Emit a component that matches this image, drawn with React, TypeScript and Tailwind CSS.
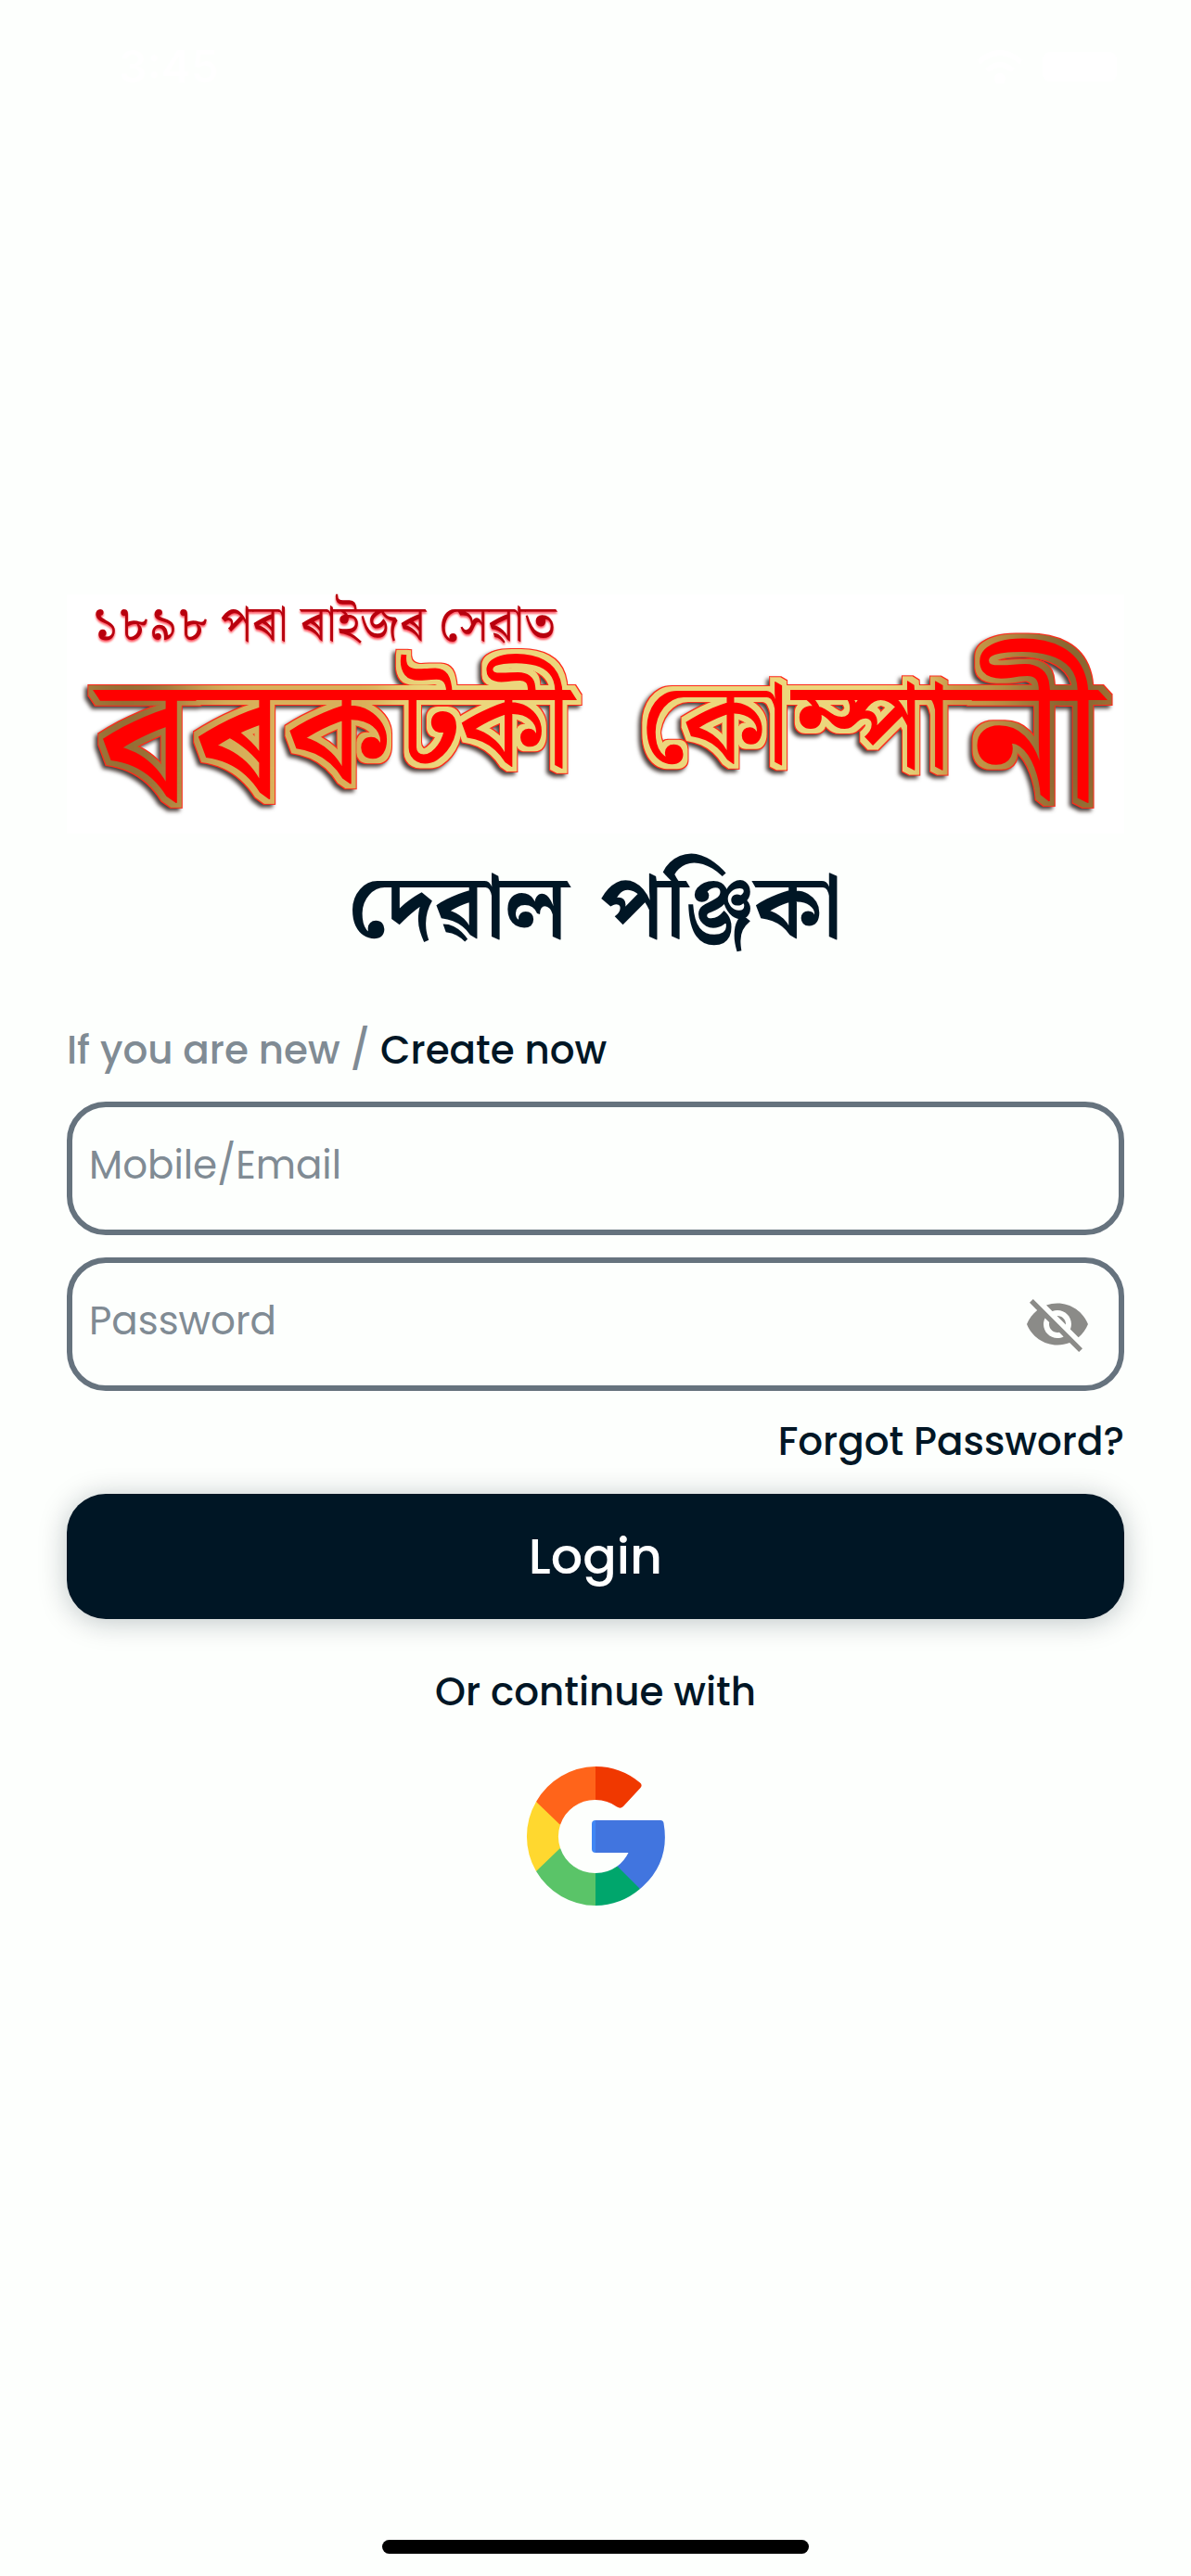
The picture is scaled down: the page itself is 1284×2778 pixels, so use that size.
import { useState } from "react";

const words = [
  [
    { t: "ব", x: 35, y: 222, s: 190 },
    { t: "ৰ", x: 138, y: 218, s: 184 },
    { t: "ক", x: 237, y: 202, s: 158 },
    { t: "ট", x: 358, y: 186, s: 132 },
    { t: "কী", x: 423, y: 184, s: 130 },
  ],
  [
    { t: "কো", x: 618, y: 181, s: 124 },
    { t: "ম্পা", x: 784, y: 186, s: 132 },
    { t: "নী", x: 975, y: 220, s: 186 },
  ],
];

function BrandLogo() {
  return (
    <svg viewBox="0 0 1140 258" className="w-full overflow-visible" role="img" lang="as" aria-label="১৮৯৮ পৰা ৰাইজৰ সেৱাত বৰকটকী কোম্পানী">
      <defs>
        <filter id="gilt" filterUnits="userSpaceOnUse" x="0" y="0" width="1140" height="258" colorInterpolationFilters="sRGB">
          <feMorphology in="SourceAlpha" operator="dilate" radius="6" result="rim" />
          <feMorphology in="SourceAlpha" operator="dilate" radius="5" result="edge" />
          <feFlood floodColor="#ecd67c" result="base" />
          <feFlood x="0" y="0" width="340" height="258" floodColor="#d9b05a" result="l2" />
          <feFlood x="0" y="0" width="130" height="258" floodColor="#946c34" result="l1" />
          <feFlood x="940" y="0" width="200" height="258" floodColor="#c69748" result="r2" />
          <feFlood x="1030" y="0" width="110" height="258" floodColor="#85622f" result="r1" />
          <feMerge result="bands">
            <feMergeNode in="l2" />
            <feMergeNode in="l1" />
            <feMergeNode in="r2" />
            <feMergeNode in="r1" />
          </feMerge>
          <feGaussianBlur in="bands" stdDeviation="30" result="soft" />
          <feMerge result="metal">
            <feMergeNode in="base" />
            <feMergeNode in="l2" />
            <feMergeNode in="r2" />
            <feMergeNode in="soft" />
          </feMerge>
          <feGaussianBlur in="metal" stdDeviation="12 0" result="metalSoft" />
          <feComposite in="metalSoft" in2="edge" operator="in" result="gold" />
          <feFlood floodColor="#ff2a1a" />
          <feComposite in2="rim" operator="in" result="redRim" />
          <feOffset in="rim" dx="-3" dy="3" />
          <feGaussianBlur stdDeviation="2" result="blurred" />
          <feFlood floodColor="#2a1c18" floodOpacity="0.85" />
          <feComposite in2="blurred" operator="in" result="shadow" />
          <feMerge>
            <feMergeNode in="shadow" />
            <feMergeNode in="redRim" />
            <feMergeNode in="gold" />
            <feMergeNode in="SourceGraphic" />
          </feMerge>
        </filter>
        <filter id="tint" x="-5%" y="-10%" width="110%" height="120%">
          <feDropShadow dx="0" dy="2" stdDeviation="1" floodColor="#ff0018" floodOpacity="0.7" />
        </filter>
      </defs>
      <text x="27" y="50" fontSize="54" fill="#b8000c" filter="url(#tint)" className="font-['Noto_Serif_Bengali','Noto_Sans_Bengali',serif]">
        ১৮৯৮ পৰা ৰাইজৰ সেৱাত
      </text>
      <g filter="url(#gilt)" fill="#ff0000" className="font-['Noto_Serif_Bengali','Noto_Sans_Bengali',serif] font-medium">
        <path d="M28 103H543L550 114H36Z" />
        <path d="M780 103H1112L1122 114H780Z" />
        {words.map((word) => (
          <text key={word[0].t}>
            {word.map((l) => (
              <tspan key={l.t} x={l.x} y={l.y} fontSize={l.s}>
                {l.t}
              </tspan>
            ))}
          </text>
        ))}
      </g>
    </svg>
  );
}

function GoogleLogo() {
  return (
    <svg viewBox="0 0 150 150" className="size-[150px]" aria-hidden="true">
      <path d="M75 0A75 75 0 0 0 11 38L20 54L37 63A39.500 39.500 0 0 1 75 36L80 18Z" fill="#ff641a" />
      <path d="M75 0A75 75 0 0 1 123 17.500Q126 20 123.500 23L105 43Q102 46 98 43.500Q88 36 75 36Z" fill="#f03800" />
      <path d="M11 38A75 75 0 0 0 11 113L28 106L37 88A39.500 39.500 0 0 1 37 63Z" fill="#ffd82f" />
      <path d="M11 113A75 75 0 0 0 75 150L82 132L75 115A39.500 39.500 0 0 1 37 88Z" fill="#5ac468" />
      <path d="M75 150A75 75 0 0 0 123 132L117 115L98.500 107.500A39.500 39.500 0 0 1 75 115Z" fill="#00a66c" />
      <path d="M79 58H75Q71 58 71 62V89Q71 93 75 93H79Z" fill="#4086f4" />
      <path d="M75 58H145Q148 58 148.500 61Q156 104 123 132L98.500 107.500Q106 102 110.500 93H75Z" fill="#4175df" />
    </svg>
  );
}

function EyeIcon({ off }: { off: boolean }) {
  return (
    <svg viewBox="0 0 24 24" className="size-[72px]" fill="#8b8b88" aria-hidden="true">
      {off ? (
        <path d="M12 7c2.760 0 5 2.240 5 5 0 .650-.130 1.260-.360 1.830l2.920 2.920c1.510-1.260 2.700-2.890 3.430-4.750-1.730-4.390-6-7.500-11-7.500-1.400 0-2.740.250-3.980.700l2.160 2.160C10.740 7.130 11.350 7 12 7zM2 4.270l2.280 2.280.460.460C3.080 8.300 1.780 10.020 1 12c1.730 4.390 6 7.500 11 7.500 1.550 0 3.030-.300 4.380-.840l.420.420L19.730 22 21 20.730 3.270 3 2 4.270zM7.530 9.800l1.550 1.550c-.050.210-.080.430-.080.650 0 1.660 1.340 3 3 3 .220 0 .440-.030.650-.080l1.550 1.550c-.670.330-1.410.530-2.200.530-2.760 0-5-2.240-5-5 0-.790.200-1.530.530-2.200zm4.310-.780l3.150 3.150.020-.160c0-1.660-1.340-3-3-3l-.170.010z" />
      ) : (
        <path d="M12 4.500C7 4.500 2.730 7.610 1 12c1.730 4.390 6 7.500 11 7.500s9.270-3.110 11-7.500c-1.730-4.390-6-7.500-11-7.500zM12 17a5 5 0 1 1 0-10 5 5 0 0 1 0 10zm0-8a3 3 0 1 0 0 6 3 3 0 0 0 0-6z" />
      )}
    </svg>
  );
}

function StatusBar() {
  return (
    <div className="flex h-36 items-center justify-between pr-20 pl-32 font-['Inter',sans-serif] text-white">
      <span className="text-5xl font-semibold">3:45</span>
      <div className="flex items-center gap-5">
        <svg viewBox="0 0 52 36" className="h-9 w-[52px]" fill="none" stroke="currentColor" strokeWidth="6" aria-hidden="true">
          <path d="M3 13Q26 -7 49 13M12 22Q26 10 40 22" />
          <circle cx="26" cy="31" r="3" />
        </svg>
        <span className="h-8 w-20 rounded-lg bg-white" />
      </div>
    </div>
  );
}

const field =
  "h-36 w-full rounded-[42px] border-[6px] border-[#66737e] bg-transparent pb-2 pl-[18px] text-[42px] text-[#001625] outline-none placeholder:text-[#808b94] placeholder:opacity-100";

export default function App() {
  const [hidden, setHidden] = useState(true);
  return (
    <div className="flex min-h-screen flex-col bg-[#fdfffd] font-['Poppins','Inter','Noto_Sans_Bengali',sans-serif] text-[#001625]">
      <StatusBar />
      <main className="flex flex-1 flex-col px-[72px] pt-[497px]">
        <div className="bg-white">
          <BrandLogo />
        </div>
        <h1
          className="mt-2 flex justify-center gap-9 font-['Noto_Serif_Bengali','Noto_Sans_Bengali',serif] text-[97px] leading-[150px] font-bold"
          lang="as"
        >
          <span>দেৱাল</span> <span>পঞ্জিকা</span>
        </h1>
        <form className="flex flex-col" onSubmit={(e) => e.preventDefault()}>
          <p className="mt-11 mb-[23px] text-[42px] leading-[64px] font-medium text-[#808b94]">
            If you are new / <a href="#create" className="text-[#001625]">Create now</a>
          </p>
          <input className={field} type="text" aria-label="Mobile/Email" placeholder="Mobile/Email" />
          <div className="relative mt-6">
            <input className={field} type={hidden ? "password" : "text"} aria-label="Password" placeholder="Password" />
            <button type="button" aria-label="Toggle password visibility" onClick={() => setHidden(!hidden)} className="absolute inset-y-0 right-9 flex items-center">
              <EyeIcon off={hidden} />
            </button>
          </div>
          <a href="#forgot" className="mt-[23px] self-end text-[42px] leading-[64px] font-medium">Forgot Password?</a>
          <button type="submit" className="mt-6 h-[135px] rounded-[42px] bg-[#001625] text-[54px] font-medium text-white shadow-[0_3px_30px_rgba(0,22,37,0.25)]">
            Login
          </button>
        </form>
        <p className="mt-[47px] text-center text-[42px] leading-[64px] font-medium">Or continue with</p>
        <button type="button" aria-label="Continue with Google" className="mt-12 self-center">
          <GoogleLogo />
        </button>
      </main>
      <div className="mb-6 h-[15px] w-[460px] self-center rounded-full bg-black" />
    </div>
  );
}
